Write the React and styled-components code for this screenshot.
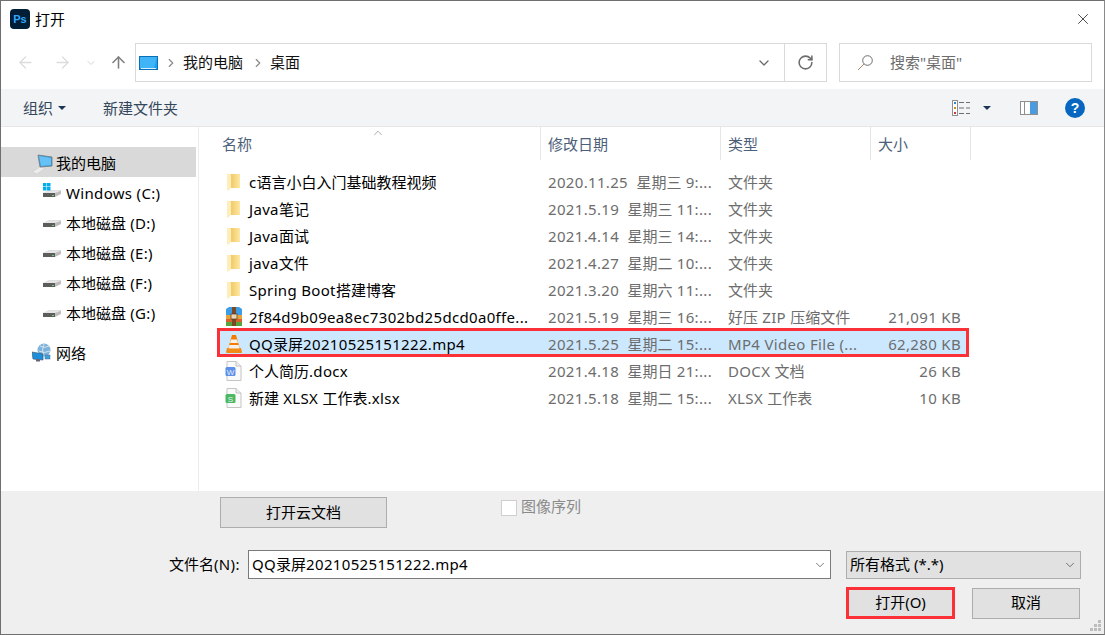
import React from 'react';
import styled, { createGlobalStyle } from 'styled-components';
import { ArrowLeft, ArrowRight, ArrowUp, ChevronDown, ChevronRight, ChevronUp, RotateCw, X } from 'lucide-react';

const GlobalStyle = createGlobalStyle`
  html, body { margin: 0; padding: 0; background: #fff; }
  * { box-sizing: border-box; }
  body { font-family: "Noto Sans", "Noto Sans CJK SC", sans-serif; font-size: 15px; line-height: 20px; color: #000; }
`;

const Dialog = styled.div`
  width: 1105px;
  height: 635px;
  border: 1px solid #6f6f6f;
  border-right-color: #8a8a8a;
  display: flex;
  flex-direction: column;
  background: #fff;
  overflow: hidden;
`;

const TitleBar = styled.div`
  height: 36px;
  flex: none;
  display: flex;
  align-items: center;
  padding: 0 12px 0 9px;
  gap: 5px;
`;
const PsIcon = styled.div`
  width: 20px;
  height: 20px;
  border-radius: 4px;
  background: #001e36;
  color: #31a8ff;
  font: bold 11px "Liberation Sans", sans-serif;
  display: flex;
  align-items: center;
  justify-content: center;
`;
const TitleText = styled.div`
  flex: 1;
  font-size: 15px;
`;

const NavRow = styled.div`
  height: 52px;
  flex: none;
  display: flex;
  align-items: flex-start;
  padding-top: 6px;
`;
const NavButtons = styled.div`
  width: 134px;
  height: 39px;
  flex: none;
  display: flex;
  align-items: center;
  padding-left: 15px;
`;
const NavBtn = styled.div`
  width: ${p => p.$w}px;
  padding-left: ${p => p.$pl || 0}px;
  display: flex;
  justify-content: flex-start;
  color: ${p => p.$color};
`;
const AddressBox = styled.div`
  width: 692px;
  height: 39px;
  flex: none;
  border: 1px solid #d9d9d9;
  display: flex;
  align-items: center;
  padding-left: 3px;
  color: #111;
`;
const Crumb = styled.span`
  margin: 0 8px 0 5px;
  padding-bottom: 2px;
`;
const Crumbs = styled.div`
  flex: 1;
  display: flex;
  align-items: center;
  svg { color: #8a8a8a; }
`;
const CrumbArrow = styled(ChevronRight)`
  margin-left: ${p => p.$ml || 0}px;
`;
const AddressEnd = styled.div`
  width: 42px;
  height: 100%;
  border-left: 1px solid #d9d9d9;
  display: flex;
  align-items: center;
  justify-content: center;
  color: #6d6d6d;
`;
const Dropper = styled.div`
  width: 40px;
  display: flex;
  justify-content: center;
  color: #6d6d6d;
`;
const SearchBox = styled.div`
  width: 253px;
  height: 39px;
  flex: none;
  margin-left: 12px;
  border: 1px solid #d9d9d9;
  display: flex;
  align-items: center;
  padding-left: 17px;
  gap: 17px;
  color: #6d6d6d;
`;
const SearchText = styled.span`
  padding-bottom: 2px;
`;

const Toolbar = styled.div`
  height: 38px;
  flex: none;
  background: #f3f4f6;
  border-bottom: 1px solid #e6e6e6;
  display: flex;
  align-items: center;
  padding: 0 19px 0 22px;
  color: #33475b;
`;
const ToolItem = styled.div`
  display: flex;
  align-items: center;
  gap: 5px;
  margin-right: ${p => p.$mr || 0}px;
`;
const Spacer = styled.div`
  flex: 1;
`;
const Caret = styled.i`
  display: block;
  width: 0;
  height: 0;
  border: 4px solid transparent;
  border-top: 4px solid #1d3557;
  border-bottom: 0;
`;
const ViewIcon = styled.div`
  margin-right: 13px;
  display: flex;
`;
const HelpIcon = styled.div`
  width: 20px;
  height: 20px;
  border-radius: 50%;
  background: #0767c0;
  color: #fff;
  font: bold 14px "Liberation Sans", sans-serif;
  display: flex;
  align-items: center;
  justify-content: center;
`;

const Main = styled.div`
  flex: 1;
  min-height: 0;
  display: flex;
`;
const Sidebar = styled.div`
  width: 198px;
  flex: none;
  border-right: 1px solid #ececec;
  padding-top: 20px;
`;
const NavItem = styled.div`
  height: 30px;
  width: 195px;
  display: flex;
  align-items: center;
  gap: ${p => p.$gap}px;
  padding: 2px 0 0 ${p => p.$pl}px;
  background: ${p => (p.$active ? '#d9d9d9' : 'transparent')};
  margin-top: ${p => p.$mt || 0}px;
`;

const FileArea = styled.div`
  flex: 1;
  min-width: 0;
  position: relative;
`;
const HeaderRow = styled.div`
  height: 33px;
  display: grid;
  grid-template-columns: 342px 180px 150px 100px;
  color: #4c607a;
`;
const HeaderCell = styled.div`
  border-right: 1px solid #e5e5e5;
  padding-left: ${p => p.$pl}px;
  display: flex;
  align-items: center;
`;
const SortMark = styled.div`
  position: absolute;
  left: 172px;
  top: -1px;
  color: #8a8a8a;
  display: flex;
`;
const FileList = styled.div`
  margin: 7px 0 0 19px;
  width: 750px;
`;
const FileRow = styled.div`
  height: 27px;
  padding-top: 2px;
  display: grid;
  grid-template-columns: 323px 180px 150px 97px;
  align-items: center;
  background: ${p => (p.$sel ? '#cce8ff' : 'transparent')};
  outline: ${p => (p.$sel ? '3px solid #fb3137' : 'none')};
  outline-offset: ${p => (p.$sel ? '-2px' : '0')};
`;
const NameCell = styled.div`
  display: flex;
  align-items: center;
  padding-left: 6px;
  gap: 6px;
  white-space: nowrap;
`;
const IconSlot = styled.div`
  width: 19px;
  height: 20px;
  display: flex;
  align-items: center;
  justify-content: center;
`;
const DateCell = styled.div`
  padding-left: 7px;
  color: #6d6d6d;
  white-space: pre;
`;
const TypeCell = styled.div`
  padding-left: 7px;
  color: #6d6d6d;
  white-space: nowrap;
`;
const SizeCell = styled.div`
  padding-right: 7px;
  text-align: right;
  color: #6d6d6d;
  white-space: nowrap;
`;
const Latin = styled.span`
  letter-spacing: 0.33px;
`;

const Bottom = styled.div`
  height: 143px;
  flex: none;
  background: #efefef;
  position: relative;
  padding: 6px 0 0 219px;
`;
const CloudRow = styled.div`
  display: flex;
  align-items: flex-start;
`;
const CloudButton = styled.div`
  width: 167px;
  height: 31px;
  padding-bottom: 2px;
  background: #e1e1e1;
  border: 1px solid #adadad;
  display: flex;
  align-items: center;
  justify-content: center;
`;
const SeqCheck = styled.div`
  margin: 3px 0 0 114px;
  display: flex;
  align-items: flex-start;
  gap: 4px;
  color: #8a8a8a;
`;
const SeqLabel = styled.span`
  margin-top: -4px;
`;
const CheckBox = styled.div`
  width: 16px;
  height: 16px;
  background: #fff;
  border: 1px solid #cfcfcf;
`;
const NameRow = styled.div`
  display: flex;
  align-items: center;
  margin: 22px 0 0 -51px;
`;
const NameLabel = styled.div`
  width: 79px;
  padding-bottom: 2px;
  white-space: nowrap;
`;
const NameInput = styled.div`
  width: 583px;
  height: 29px;
  background: #fff;
  border: 1px solid #7a7a7a;
  display: flex;
  align-items: center;
  justify-content: space-between;
  padding: 0 3px;
  color: #444;
`;
const FieldValue = styled.span`
  padding-bottom: 2px;
  color: #000;
`;
const FormatSelect = styled.div`
  width: 235px;
  height: 28px;
  margin-left: 15px;
  background: #e1e1e1;
  border: 1px solid #adadad;
  display: flex;
  align-items: center;
  justify-content: space-between;
  padding: 0 3px;
  color: #444;
`;
const ActionRow = styled.div`
  display: flex;
  margin: 8px 0 0 626px;
  gap: 17px;
  align-items: center;
`;
const ActionButton = styled.div`
  width: ${p => p.$w}px;
  height: ${p => p.$h}px;
  background: #e1e1e1;
  border: ${p => (p.$hot ? '3px solid #fb3137' : '1px solid #adadad')};
  padding-bottom: 2px;
  display: flex;
  align-items: center;
  justify-content: center;
`;
const Grip = styled.svg`
  position: absolute;
  right: 2px;
  bottom: 2px;
`;

const Folder = () => (
  <svg width="13" height="18" viewBox="0 0 13 18">
    <defs>
      <linearGradient id="foldBack" x1="0" y1="0" x2="1" y2="0">
        <stop offset="0" stopColor="#f2c65c" />
        <stop offset="1" stopColor="#fde8a6" />
      </linearGradient>
    </defs>
    <path d="M3 1 H13 V15 H3 Z" fill="url(#foldBack)" />
    <path d="M0 0.5 L4 1.5 V15 L1 18 L0 17 Z" fill="#fdeebb" />
  </svg>
);

const Monitor = ({ w = 19, h = 14 }) => (
  <svg width={w} height={h} viewBox="0 0 19 14">
    <rect x="0.5" y="0.5" width="18" height="13" fill="#1ba1f2" stroke="#0b6fb8" />
    <path d="M1 1 H18 L15 12 H1 Z" fill="#3fb4f7" />
    <path d="M2 12.5 H17" stroke="#d8f0ff" />
  </svg>
);

const PcIcon = () => (
  <svg width="22" height="22" viewBox="0 0 22 22">
    <path d="M0 20 L8 15 L13 16 L5 22 Z" fill="#ececec" stroke="#cfcfcf" strokeWidth="0.6" />
    <path d="M6 3 L20 5 V14 L8 15 Z" fill="#2f9be3" stroke="#777" strokeWidth="0.8" />
    <path d="M7 4 L19 6 V13 L9 14 Z" fill="#67c1f5" />
  </svg>
);

const DriveBody = () => (
  <>
    <path d="M1 10 L7 7 H19 V10 L7 13 Z" fill="#d9d9d9" />
    <path d="M1 10 L7 7.5 H19 L13 10 Z" fill="#e6e6e6" />
    <path d="M1 10 H13 V14 H1 Z" fill="#5d5d5d" />
    <path d="M13 10 L19 8 V11 L13 14 Z" fill="#bdbdbd" />
    <rect x="10" y="12" width="2" height="1" fill="#6fd06f" />
  </>
);

const Drive = () => (
  <svg width="20" height="20" viewBox="0 0 20 20"><DriveBody /></svg>
);

const WinDrive = () => (
  <svg width="20" height="20" viewBox="0 0 20 20">
    <DriveBody />
    <rect x="1" y="0" width="3.5" height="3.5" fill="#00adef" />
    <rect x="5" y="0" width="3.5" height="3.5" fill="#00adef" />
    <rect x="1" y="4" width="3.5" height="3.5" fill="#00adef" />
    <rect x="5" y="4" width="3.5" height="3.5" fill="#00adef" />
  </svg>
);

const NetIcon = () => (
  <svg width="20" height="20" viewBox="0 0 20 20">
    <circle cx="12" cy="7" r="6.5" fill="#7fb2d8" />
    <path d="M8 3 Q12 6 17 3 M7 8 Q12 11 18 8 M12 1 Q9 7 12 13" stroke="#e3eff7" fill="none" strokeWidth="0.8" />
    <path d="M0 9 L11 11 V17 L1 16 Z" fill="#1c8fdc" stroke="#3d5f7a" strokeWidth="0.7" />
    <rect x="4" y="16" width="4" height="2.5" fill="#667" />
    <rect x="13" y="12" width="5" height="4" fill="#3ba0e0" stroke="#4a6f8a" strokeWidth="0.5" />
  </svg>
);

const ZipIcon = () => (
  <svg width="18" height="19" viewBox="0 0 18 19">
    <path d="M1 2 L4 0 H14 L17 2 V8 H1 Z" fill="#3d9ee6" />
    <rect x="1" y="8" width="16" height="4" fill="#e8a23a" />
    <rect x="1" y="12" width="16" height="3" fill="#d9602f" />
    <rect x="1" y="15" width="16" height="4" fill="#55a43c" />
    <rect x="7" y="0" width="4" height="19" fill="#7a4a24" />
    <rect x="6" y="7" width="6" height="5" fill="#e8d7b5" stroke="#5a3818" strokeWidth="0.7" />
  </svg>
);

const ConeIcon = () => (
  <svg width="18" height="20" viewBox="0 0 18 20">
    <path d="M2 14 H16 L17 18 Q17 19 16 19 H2 Q1 19 1 18 Z" fill="#f28a16" />
    <path d="M7 1 H11 L15 15 H3 Z" fill="#f57c00" />
    <path d="M6 5.5 H12 L13 9 H5 Z" fill="#f5f1e8" />
    <path d="M4.3 11 H13.7 L14.6 14.5 H3.4 Z" fill="#f5f1e8" />
  </svg>
);

const DocIcon = ({ color, letter }) => (
  <svg width="17" height="20" viewBox="0 0 17 20">
    <path d="M2 0.5 H11 L16 5 V19.5 H2 Z" fill="#fafafa" stroke="#c4c4c4" />
    <path d="M11 0.5 V5 H16" fill="#eee" stroke="#c4c4c4" />
    <rect x="0.5" y="6" width="10" height="9" rx="1.5" fill={color} />
    <text x="5.5" y="13.5" fontSize="8" fontFamily="Liberation Sans" fill="#e8f0ff" textAnchor="middle">{letter}</text>
  </svg>
);

const SearchGlass = () => (
  <svg width="16" height="16" viewBox="0 0 16 16" fill="none" stroke="#6d6d6d">
    <circle cx="10.5" cy="5.5" r="4.8" />
    <path d="M7 9 L1 15" stroke="#a98a70" />
  </svg>
);

const DetailsIcon = () => (
  <svg width="18" height="16" viewBox="0 0 18 16">
    <rect x="0.5" y="0.5" width="5" height="15" fill="#fff" stroke="#8f8f8f" />
    <rect x="2" y="2" width="2" height="2" fill="#2f86d0" />
    <rect x="2" y="7" width="2" height="2" fill="#c98a2a" />
    <rect x="2" y="12" width="2" height="2" fill="#d13438" />
    <path d="M7 2.5 H12 M14 2.5 H18 M7 8 H12 M14 8 H18 M7 13.5 H12 M14 13.5 H18" stroke="#6d6d6d" />
  </svg>
);

const PaneIcon = () => (
  <svg width="18" height="14" viewBox="0 0 18 14">
    <rect x="0.5" y="0.5" width="17" height="13" fill="#fff" stroke="#8f8f8f" />
    <rect x="10" y="1" width="7" height="12" fill="#4a9be0" />
    <rect x="4" y="1" width="1" height="12" fill="#8f8f8f" />
  </svg>
);

// the reference's Latin glyphs run wider than the CJK ones, so only those runs get spaced
const Spaced = ({ children }) => children.split(/([\x20-\x7e]+)/).map((part, i) => (
  i % 2 ? <Latin key={i}>{part}</Latin> : part
));

const drives = [
  { name: 'Windows (C:)', icon: <WinDrive /> },
  { name: '本地磁盘 (D:)', icon: <Drive /> },
  { name: '本地磁盘 (E:)', icon: <Drive /> },
  { name: '本地磁盘 (F:)', icon: <Drive /> },
  { name: '本地磁盘 (G:)', icon: <Drive /> },
];

const files = [
  { name: 'c语言小白入门基础教程视频', date: '2020.11.25  星期三 9:...', type: '文件夹', size: '', icon: <Folder /> },
  { name: 'Java笔记', date: '2021.5.19  星期三 11:...', type: '文件夹', size: '', icon: <Folder /> },
  { name: 'Java面试', date: '2021.4.14  星期三 14:...', type: '文件夹', size: '', icon: <Folder /> },
  { name: 'java文件', date: '2021.4.27  星期二 10:...', type: '文件夹', size: '', icon: <Folder /> },
  { name: 'Spring Boot搭建博客', date: '2021.3.20  星期六 11:...', type: '文件夹', size: '', icon: <Folder /> },
  { name: '2f84d9b09ea8ec7302bd25dcd0a0ffe...', date: '2021.5.19  星期三 16:...', type: '好压 ZIP 压缩文件', size: '21,091 KB', icon: <ZipIcon /> },
  { name: 'QQ录屏20210525151222.mp4', date: '2021.5.25  星期二 15:...', type: 'MP4 Video File (...', size: '62,280 KB', icon: <ConeIcon />, sel: true },
  { name: '个人简历.docx', date: '2021.4.18  星期日 21:...', type: 'DOCX 文档', size: '26 KB', icon: <DocIcon color="#5b8fe8" letter="W" /> },
  { name: '新建 XLSX 工作表.xlsx', date: '2021.5.18  星期二 15:...', type: 'XLSX 工作表', size: '10 KB', icon: <DocIcon color="#4cb860" letter="S" /> },
];

export default function App() {
  return (
    <Dialog>
      <GlobalStyle />
      <TitleBar>
        <PsIcon>Ps</PsIcon>
        <TitleText>打开</TitleText>
        <X size={18} strokeWidth={1} color="#111" />
      </TitleBar>
      <NavRow>
        <NavButtons>
          <NavBtn $w={37} $color="#dcdcdc"><ArrowLeft size={19} strokeWidth={1.6} /></NavBtn>
          <NavBtn $w={32} $color="#dcdcdc"><ArrowRight size={19} strokeWidth={1.6} /></NavBtn>
          <NavBtn $w={20} $color="#d4d4d4"><ChevronDown size={12} strokeWidth={2} /></NavBtn>
          <NavBtn $w={26} $pl={4} $color="#808080"><ArrowUp size={19} strokeWidth={2} /></NavBtn>
        </NavButtons>
        <AddressBox>
          <Crumbs>
            <Monitor />
            <CrumbArrow size={14} strokeWidth={2} $ml={6} />
            <Crumb>我的电脑</Crumb>
            <CrumbArrow size={14} strokeWidth={2} />
            <Crumb>桌面</Crumb>
          </Crumbs>
          <Dropper><ChevronDown size={16} strokeWidth={2} /></Dropper>
          <AddressEnd><RotateCw size={17} strokeWidth={2.2} /></AddressEnd>
        </AddressBox>
        <SearchBox>
          <SearchGlass />
          <SearchText>搜索"桌面"</SearchText>
        </SearchBox>
      </NavRow>
      <Toolbar>
        <ToolItem $mr={37}>组织 <Caret /></ToolItem>
        <ToolItem>新建文件夹</ToolItem>
        <Spacer />
        <ViewIcon><DetailsIcon /></ViewIcon>
        <ToolItem $mr={29}><Caret /></ToolItem>
        <ToolItem $mr={27}><PaneIcon /></ToolItem>
        <HelpIcon>?</HelpIcon>
      </Toolbar>
      <Main>
        <Sidebar>
          <NavItem $pl={31} $gap={2} $active><PcIcon />我的电脑</NavItem>
          {drives.map(d => (
            <NavItem key={d.name} $pl={41} $gap={4}>{d.icon}<span><Spaced>{d.name}</Spaced></span></NavItem>
          ))}
          <NavItem $pl={31} $gap={4} $mt={10}><NetIcon />网络</NavItem>
        </Sidebar>
        <FileArea>
          <SortMark><ChevronUp size={14} strokeWidth={1.2} /></SortMark>
          <HeaderRow>
            <HeaderCell $pl={23}>名称</HeaderCell>
            <HeaderCell $pl={7}>修改日期</HeaderCell>
            <HeaderCell $pl={7}>类型</HeaderCell>
            <HeaderCell $pl={7}>大小</HeaderCell>
          </HeaderRow>
          <FileList>
            {files.map(f => (
              <FileRow key={f.name} $sel={f.sel}>
                <NameCell><IconSlot>{f.icon}</IconSlot><span><Spaced>{f.name}</Spaced></span></NameCell>
                <DateCell><Spaced>{f.date}</Spaced></DateCell>
                <TypeCell><Spaced>{f.type}</Spaced></TypeCell>
                <SizeCell><Spaced>{f.size}</Spaced></SizeCell>
              </FileRow>
            ))}
          </FileList>
        </FileArea>
      </Main>
      <Bottom>
        <CloudRow>
          <CloudButton>打开云文档</CloudButton>
          <SeqCheck><CheckBox /><SeqLabel>图像序列</SeqLabel></SeqCheck>
        </CloudRow>
        <NameRow>
          <NameLabel><Spaced>文件名(N):</Spaced></NameLabel>
          <NameInput>
            <FieldValue><Spaced>QQ录屏20210525151222.mp4</Spaced></FieldValue>
            <ChevronDown size={14} strokeWidth={1.2} />
          </NameInput>
          <FormatSelect>
            <FieldValue>所有格式 (*.*)</FieldValue>
            <ChevronDown size={14} strokeWidth={1.2} />
          </FormatSelect>
        </NameRow>
        <ActionRow>
          <ActionButton $w={109} $h={32} $hot>打开(O)</ActionButton>
          <ActionButton $w={108} $h={31}>取消</ActionButton>
        </ActionRow>
        <Grip width="12" height="12" viewBox="0 0 12 12" fill="#bdbdbd">
          <rect x="8" y="0" width="3" height="3" />
          <rect x="4" y="4" width="3" height="3" />
          <rect x="8" y="4" width="3" height="3" />
          <rect x="0" y="8" width="3" height="3" />
          <rect x="4" y="8" width="3" height="3" />
          <rect x="8" y="8" width="3" height="3" />
        </Grip>
      </Bottom>
    </Dialog>
  );
}
